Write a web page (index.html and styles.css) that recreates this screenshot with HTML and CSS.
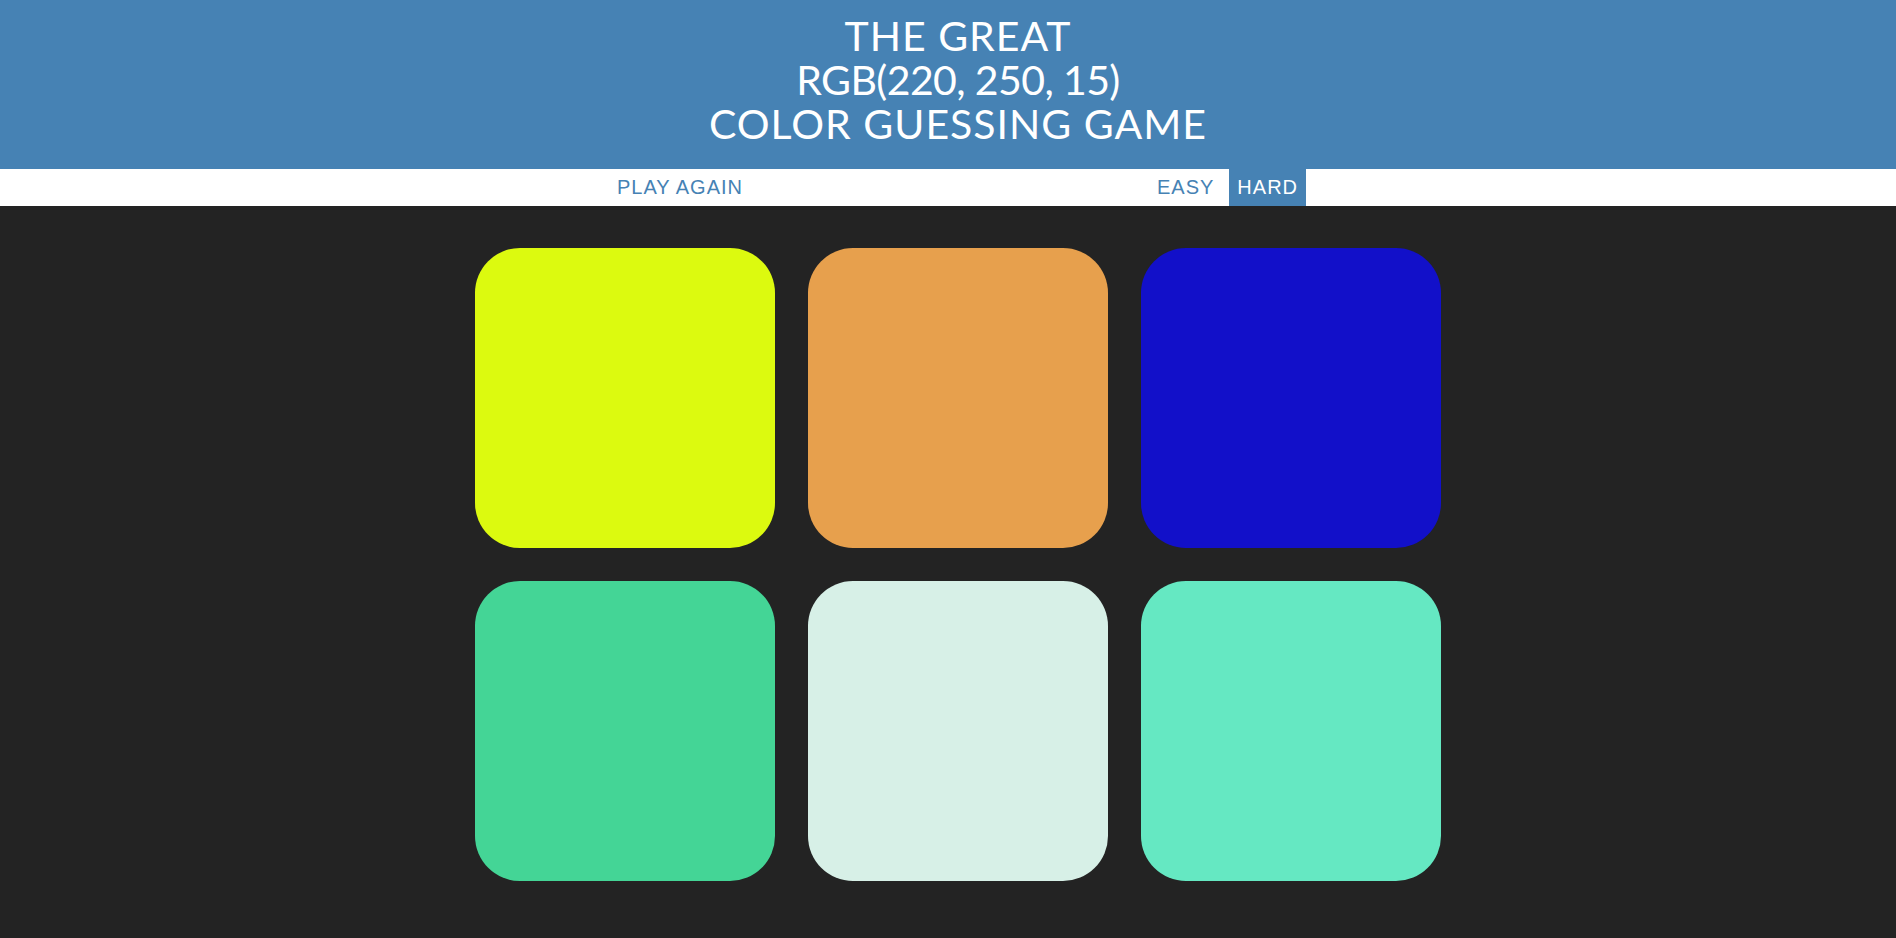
FILE: index.html
```html
<!DOCTYPE html>
<html>
<head>
<meta charset="utf-8">
<title>Color Game</title>
<link rel="stylesheet" href="styles.css">
</head>
<body>
  <header class="banner">
    <h1 class="title">The Great<br><span class="rgb">RGB(220, 250, 15)</span><br>Color Guessing Game</h1>
  </header>
  <nav class="stripe">
    <div class="stripe-inner">
      <button class="btn reset">Play Again</button>
      <span class="message"></span>
      <button class="btn mode">Easy</button>
      <button class="btn mode selected">Hard</button>
    </div>
  </nav>
  <main class="container">
    <div class="grid">
      <div class="square" style="background: rgb(220, 250, 15);"></div>
      <div class="square" style="background: rgb(231, 160, 77);"></div>
      <div class="square" style="background: rgb(18, 16, 201);"></div>
      <div class="square" style="background: rgb(68, 213, 150);"></div>
      <div class="square" style="background: rgb(215, 240, 231);"></div>
      <div class="square" style="background: rgb(101, 232, 194);"></div>
    </div>
  </main>
</body>
</html>
```

FILE: styles.css
```css
html, body {
  margin: 0;
  padding: 0;
}

body {
  background: #232323;
  font-family: "Liberation Sans", Arial, sans-serif;
  min-height: 938px;
}

.banner {
  background: #4682b4;
  height: 169px;
  box-sizing: border-box;
  padding-top: 14px;
  padding-left: 20px;
}

.title {
  margin: 0;
  color: #ffffff;
  font-family: Lato, "Open Sans", sans-serif;
  font-weight: 400;
  font-size: 41px;
  line-height: 44px;
  letter-spacing: 1px;
  text-align: center;
  text-transform: uppercase;
}

.rgb {
  letter-spacing: -0.6px;
}

.stripe {
  background: #ffffff;
  height: 37px;
}

.stripe-inner {
  width: 966px;
  height: 100%;
  margin: 0 auto;
  padding-left: 20px;
  display: flex;
  justify-content: center;
  align-items: stretch;
}

.btn {
  border: none;
  background: none;
  color: #4682b4;
  font-family: "Liberation Sans", Arial, sans-serif;
  font-size: 20px;
  letter-spacing: 1px;
  text-transform: uppercase;
  padding: 0 7px;
  margin: 0;
  height: 100%;
  cursor: pointer;
}

.message {
  width: 400px;
}

.mode {
  margin-right: 8px;
}

.mode.selected {
  margin-right: 0;
  background: #4682b4;
  color: #ffffff;
  padding: 0 8px;
}

.container {
  width: 966px;
  margin: 0 auto;
  padding-left: 20px;
  padding-top: 42px;
}

.grid {
  display: grid;
  grid-template-columns: repeat(3, 300px);
  gap: 33px;
}

.square {
  width: 300px;
  height: 300px;
  border-radius: 45px;
}
```
